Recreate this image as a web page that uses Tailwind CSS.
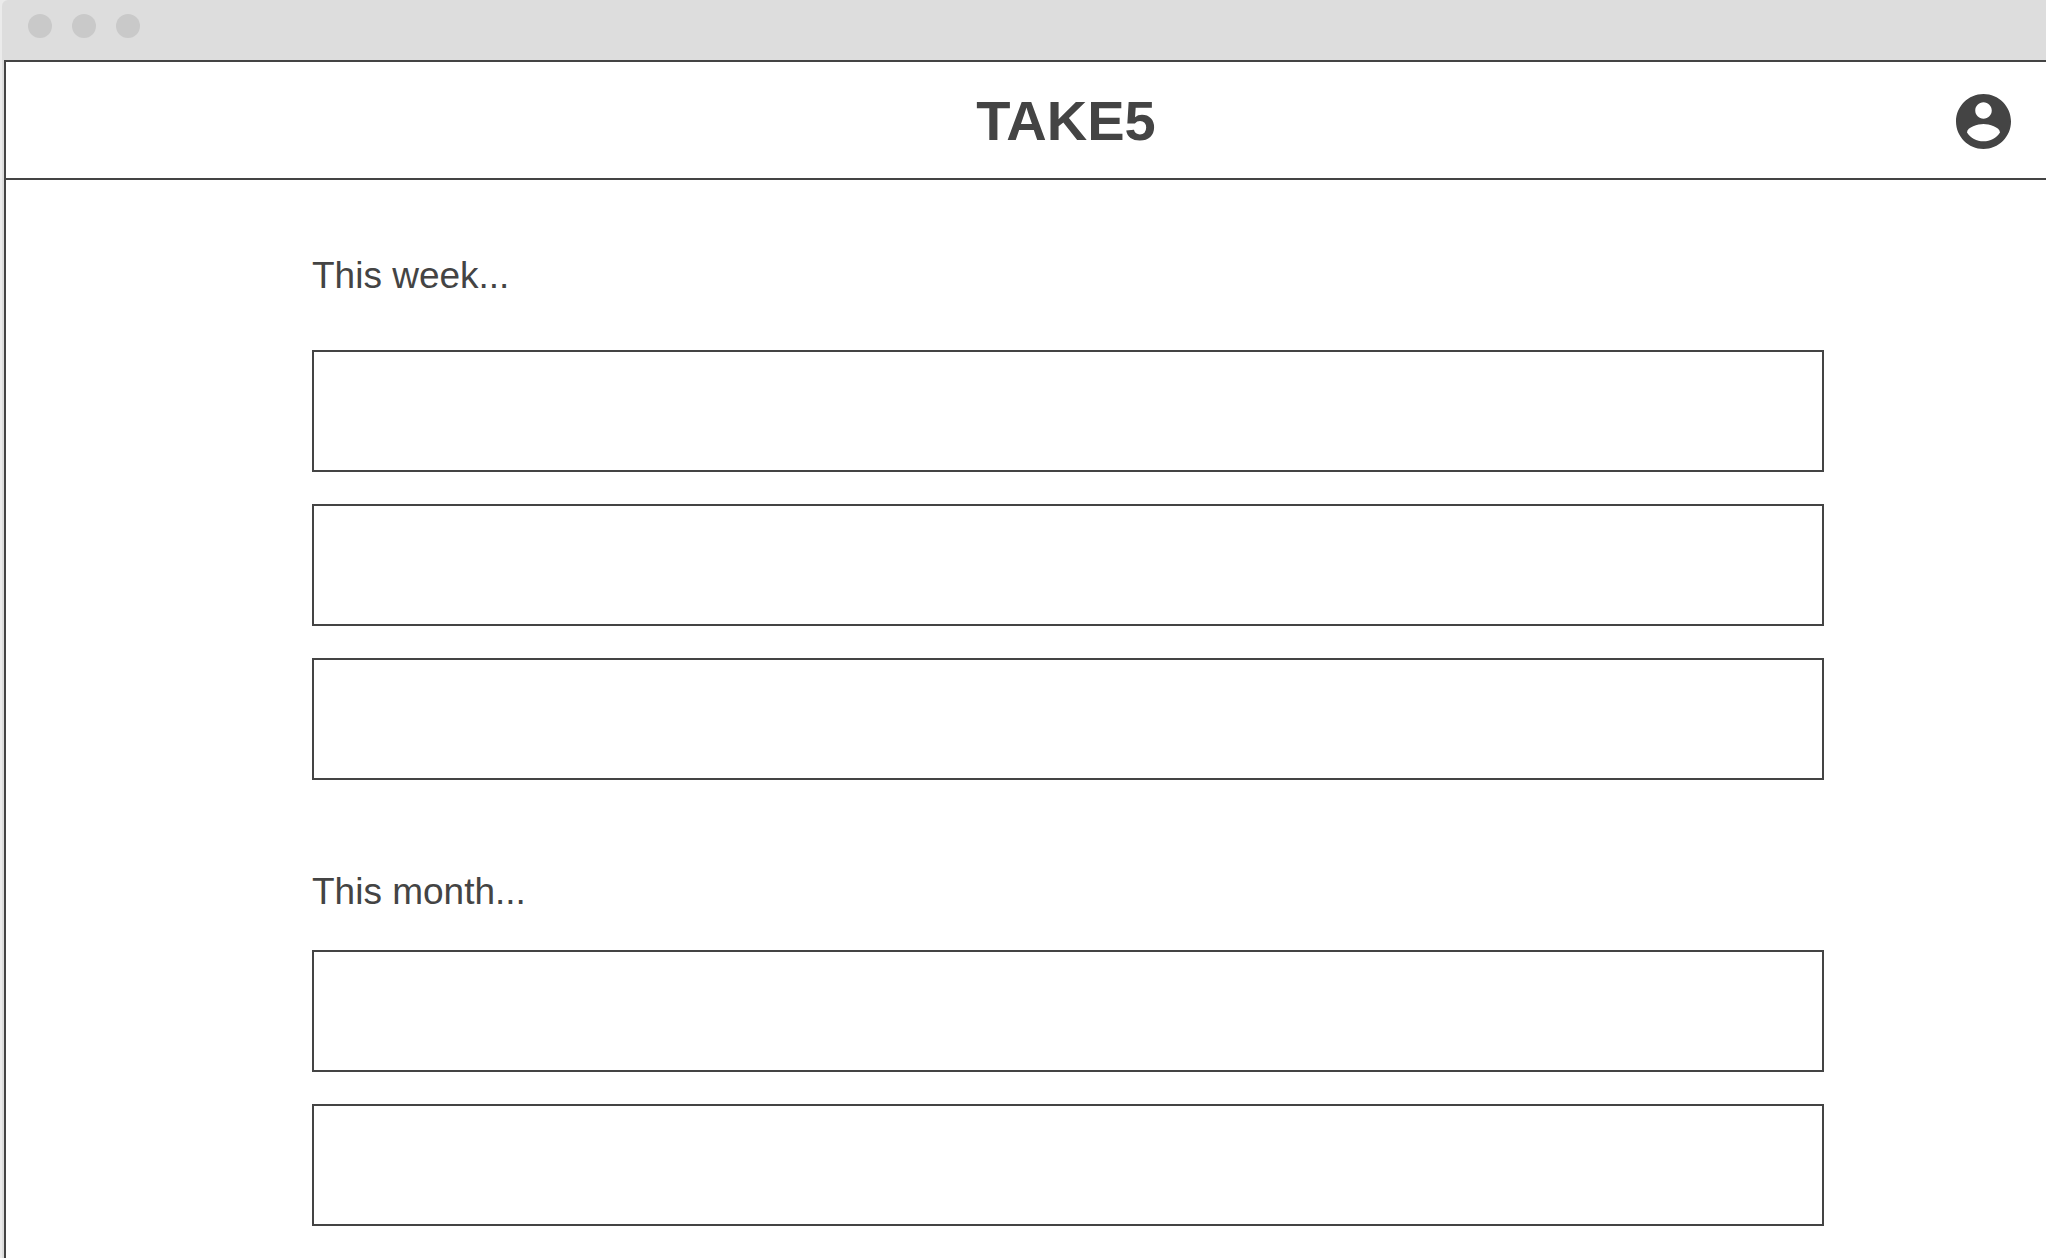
<!DOCTYPE html>
<html lang="en">
<head>
<meta charset="utf-8">
<meta name="viewport" content="width=device-width, initial-scale=1">
<title>TAKE5</title>
<script src="https://cdn.jsdelivr.net/npm/@tailwindcss/browser@4"></script>
</head>
<body class="bg-[#ebebeb] pl-[2px] font-['Liberation_Sans',Arial,sans-serif] text-[#444444]">
<div class="flex min-h-screen flex-col rounded-tl-md bg-[#dddddd]">
  <!-- Window title bar -->
  <div class="flex h-[60px] gap-5 pt-[14px] pl-[26px]">
    <span class="size-6 rounded-full bg-[#c9c9c9]"></span>
    <span class="size-6 rounded-full bg-[#c9c9c9]"></span>
    <span class="size-6 rounded-full bg-[#c9c9c9]"></span>
  </div>
  <div class="ml-[2px] flex-1 border-t-2 border-l-2 border-[#444444] bg-white">
    <header class="grid h-[118px] grid-cols-[1fr_auto_1fr] items-center border-b-2 border-[#444444] pt-[2px] pr-[35px] pl-[115px]">
      <h1 class="col-start-2 text-[56px] leading-[64px] font-bold">TAKE5</h1>
      <button type="button" aria-label="Account" class="justify-self-end">
        <svg class="block size-[55px]" viewBox="2 2 20 20" fill="currentColor" aria-hidden="true"><path d="M12 2C6.48 2 2 6.48 2 12s4.48 10 10 10 10-4.480 10-10S17.520 2 12 2zm0 3c1.660 0 3 1.340 3 3s-1.340 3-3 3-3-1.340-3-3 1.340-3 3-3zm0 14.200c-2.500 0-4.710-1.280-6-3.220.030-1.990 4-3.080 6-3.080 1.990 0 5.970 1.090 6 3.080-1.290 1.940-3.500 3.220-6 3.220z"/></svg>
      </button>
    </header>
    <main class="flex flex-col gap-[92px] pt-[76px] pr-[222px] pb-8 pl-[306px]">
      <section class="flex flex-col gap-8">
        <h2 id="week" class="mb-[22px] text-[37px] leading-10">This week...</h2>
        <input type="text" aria-labelledby="week" class="h-[122px] w-full border-2 border-[#444444] px-6 text-[37px]">
        <input type="text" aria-labelledby="week" class="h-[122px] w-full border-2 border-[#444444] px-6 text-[37px]">
        <input type="text" aria-labelledby="week" class="h-[122px] w-full border-2 border-[#444444] px-6 text-[37px]">
      </section>
      <section class="flex flex-col gap-8">
        <h2 id="month" class="mb-[6px] text-[37px] leading-10">This month...</h2>
        <input type="text" aria-labelledby="month" class="h-[122px] w-full border-2 border-[#444444] px-6 text-[37px]">
        <input type="text" aria-labelledby="month" class="h-[122px] w-full border-2 border-[#444444] px-6 text-[37px]">
      </section>
    </main>
  </div>
</div>
</body>
</html>
